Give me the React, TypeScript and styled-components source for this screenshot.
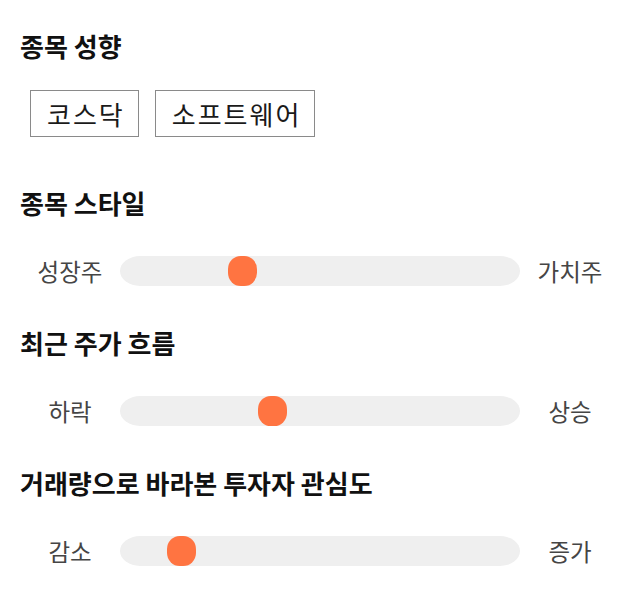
import React from "react";
import styled, { createGlobalStyle } from "styled-components";

const GlobalStyle = createGlobalStyle`
  html, body {
    margin: 0;
    padding: 0;
    background: #ffffff;
  }
  body {
    font-family: "Noto Sans CJK KR", "Noto Sans", sans-serif;
    color: #111111;
  }
`;

const Page = styled.div`
  width: 640px;
  box-sizing: border-box;
  padding: 28px 20px 0 20px;
  display: flex;
  flex-direction: column;
`;

const Section = styled.section<{ $top: number }>`
  display: flex;
  flex-direction: column;
  margin-top: ${(p) => p.$top}px;
`;

const Heading = styled.h2<{ $gap: number }>`
  margin: 0 0 ${(p) => p.$gap}px 0;
  font-size: 26px;
  line-height: 36px;
  font-weight: 700;
  color: #111111;
  white-space: nowrap;
`;

const TagRow = styled.div`
  display: flex;
  gap: 16px;
  padding-left: 10px;
`;

const Tag = styled.div`
  box-sizing: border-box;
  height: 47px;
  padding: 0 13px 0 16px;
  display: flex;
  align-items: center;
  border: 1px solid #8a8a8a;
  font-size: 26px;
  letter-spacing: 2px;
  color: #1a1a1a;
`;

const SliderRow = styled.div`
  display: flex;
  align-items: center;
  height: 40px;
`;

const SideLabel = styled.div`
  width: 100px;
  flex: none;
  text-align: center;
  font-size: 23.5px;
  line-height: 40px;
  color: #454545;
`;

const Track = styled.div`
  position: relative;
  flex: 1;
  height: 30px;
  background: #efefef;
  border-radius: 20px / 15px;
`;

const Thumb = styled.div`
  position: absolute;
  top: 0;
  width: 29px;
  height: 30px;
  border-radius: 44%;
  background: #ff7441;
`;

type SliderData = { title: string; left: string; right: string; value: number; top: number };

const sliders: SliderData[] = [
  { title: "종목 스타일", left: "성장주", right: "가치주", value: 0.29, top: 48 },
  { title: "최근 주가 흐름", left: "하락", right: "상승", value: 0.373, top: 34 },
  { title: "거래량으로 바라본 투자자 관심도", left: "감소", right: "증가", value: 0.127, top: 34 },
];

const Slider: React.FC<{ data: SliderData }> = ({ data }) => (
  <Section $top={data.top}>
    <Heading $gap={30}>{data.title}</Heading>
    <SliderRow>
      <SideLabel>{data.left}</SideLabel>
      <Track>
        <Thumb style={{ left: `calc((100% - 29px) * ${data.value})` }} />
      </Track>
      <SideLabel>{data.right}</SideLabel>
    </SliderRow>
  </Section>
);

export default function App() {
  return (
    <>
      <GlobalStyle />
      <Page>
        <Section $top={0}>
          <Heading $gap={26}>종목 성향</Heading>
          <TagRow>
            <Tag>코스닥</Tag>
            <Tag>소프트웨어</Tag>
          </TagRow>
        </Section>
        {sliders.map((s) => (
          <Slider key={s.title} data={s} />
        ))}
      </Page>
    </>
  );
}
